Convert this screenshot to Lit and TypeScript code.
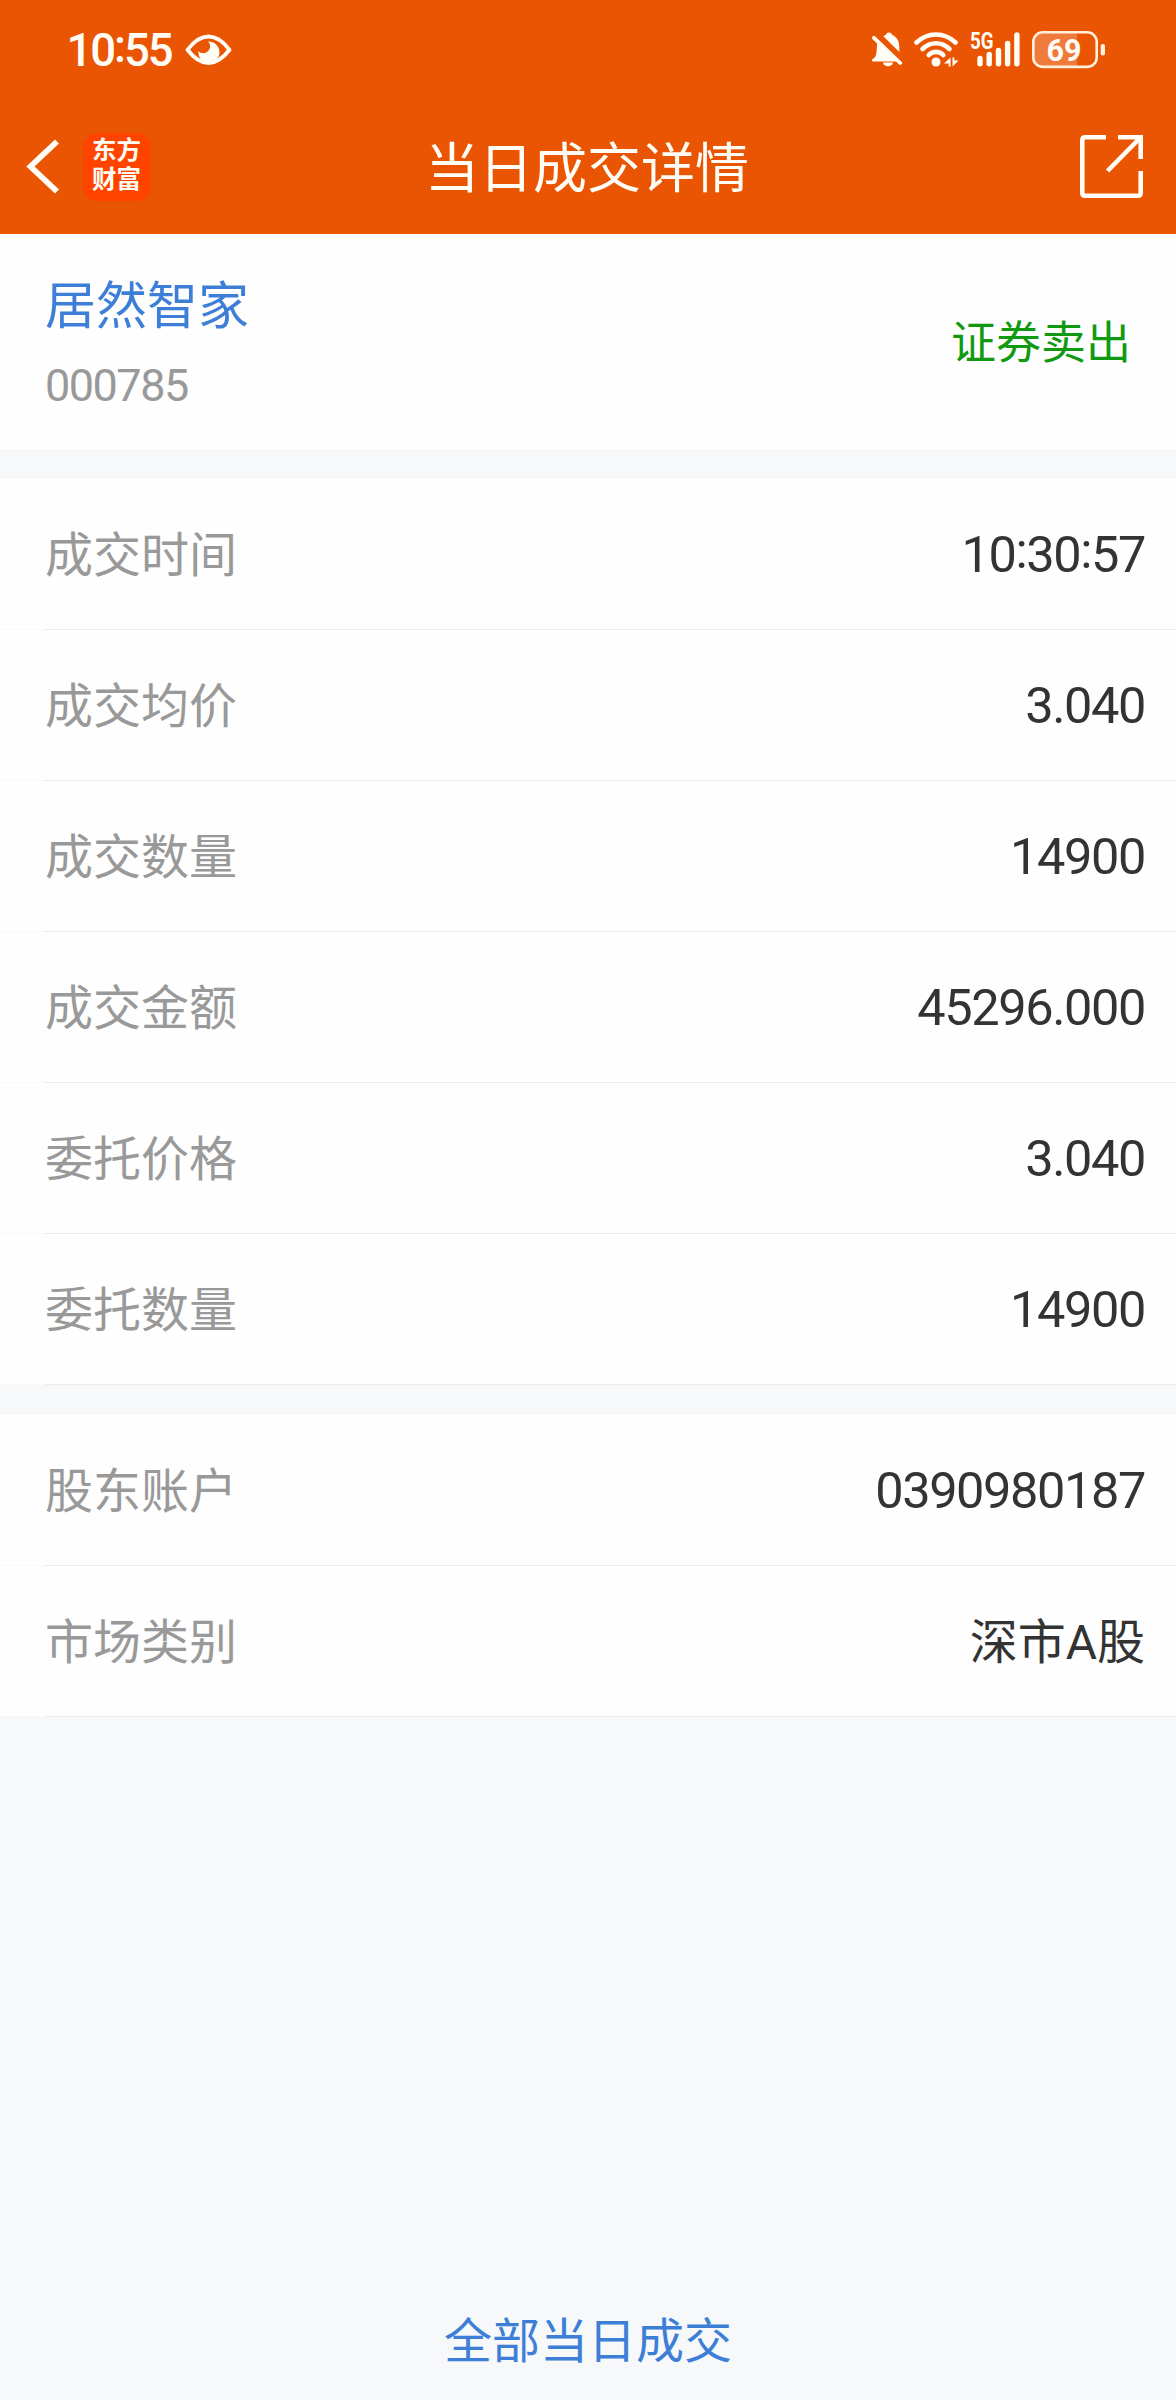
import { LitElement, html, css, svg } from "lit";
import { customElement, property } from "lit/decorators.js";

interface Row {
  label: string;
  value: string;
}

const tradeRows: Row[] = [
  { label: "成交时间", value: "10:30:57" },
  { label: "成交均价", value: "3.040" },
  { label: "成交数量", value: "14900" },
  { label: "成交金额", value: "45296.000" },
  { label: "委托价格", value: "3.040" },
  { label: "委托数量", value: "14900" },
];

const accountRows: Row[] = [
  { label: "股东账户", value: "0390980187" },
  { label: "市场类别", value: "深市A股" },
];

/* Colons sit a little higher than the baseline, centred on the digits. */
const raiseColons = (text: string) =>
  text.split(/(:)/).map((p) => (p === ":" ? html`<span class="colon">:</span>` : p));

@customElement("status-bar")
export class StatusBar extends LitElement {
  static styles = css`
    :host {
      display: flex;
      align-items: center;
      height: 100px;
      padding: 0 71px 0 66.5px;
      box-sizing: border-box;
      color: #fffdf5;
    }
    svg {
      display: block;
      flex: none;
    }
    .clock {
      width: 118px;
      padding-top: 1px;
      font-size: 45.5px;
      font-weight: 500;
      line-height: 60px;
      letter-spacing: -2.1px;
      white-space: nowrap;
    }
    .colon {
      vertical-align: 4px;
      line-height: 0;
    }
    .icons {
      display: flex;
      align-items: center;
      gap: 11px;
      margin-left: auto;
    }
    .signal {
      overflow: visible;
    }
  `;

  render() {
    return html`
      <div class="clock">${raiseColons("10:55")}</div>
      <svg width="47" height="32" viewBox="184.5 33.5 47 32">
        <path
          d="M187 49.300 C194 40 200 36 208 36 C216 36 222 40 229 49.300 C222 58.500 216 62.500 208 62.500 C200 62.500 194 58.500 187 49.300 Z"
          fill="none" stroke="#fffdf5" stroke-width="3.900" stroke-linejoin="round" />
        <path
          d="M207.500 41 C214.500 41 219 45.800 219 51.800 C219 58 214 62.500 208.500 62.500 C202 62.500 197.500 57.500 197.800 50.500 C200 53 203.500 53.500 206.500 51.500 C210.300 49 210.500 44 207.500 41 Z"
          fill="#fffdf5" />
      </svg>
      <div class="icons">
        <svg width="31" height="36" viewBox="872 32 31 36">
          <path d="M883.300 36.300 C884.500 35.500 885.300 35 886 34.700 C886.500 31.700 891.500 31.700 892 34.700 C897.500 37 899.300 42 899.300 47 L899.300 52 Z" fill="#fffdf5" />
          <path d="M877.300 41.500 L896 58.700 L896 61.500 L873.500 61.500 C871.500 61.500 871.500 59 873.500 58.500 C875.500 57.500 876.200 55 876.500 52 Z" fill="#fffdf5" />
          <path d="M883 62.500 H893 C892.500 67.500 883.500 67.500 883 62.500 Z" fill="#fffdf5" />
          <path d="M874 37.800 L900.200 63" stroke="#fffdf5" stroke-width="3.800" stroke-linecap="round" />
        </svg>
        <svg width="45" height="36" viewBox="914 32 45 36">
          <g fill="none" stroke="#fffdf5" stroke-width="4.600" stroke-linecap="round">
            <path d="M916.500 42.500 C928 31.800 944 31.800 955.500 42.500" />
            <path d="M922.500 49 C930.500 41.300 941.500 41.300 949.500 49" />
            <path d="M928.700 55 C932.700 50.800 939.300 50.800 943.300 55" />
          </g>
          <circle cx="936" cy="62" r="4.500" fill="#fffdf5" />
          <path d="M950.500 57.500 V66.500 H948.700 V63.500 H944 Z M952.500 66.500 V57.500 H954.300 V60.500 H958.500 Z" fill="#fffdf5" />
        </svg>
        <svg class="signal" width="51" height="36" viewBox="970 32 51 36">
          <text x="970" y="49.300" font-size="23" font-weight="700" textLength="23.500" lengthAdjust="spacingAndGlyphs" fill="#fffdf5">5G</text>
          ${[
            [980, 58.5],
            [989.2, 54.5],
            [998.5, 50.5],
            [1007.6, 43.5],
            [1016.9, 35],
          ].map(
            ([x, y]) => svg`<path d="M${x} ${y} V63.700" stroke="#fffdf5" stroke-width="5.400" stroke-linecap="round" />`
          )}
        </svg>
        <svg width="73" height="38" viewBox="1032 31 73 38">
          <path d="M1043 33 H1077 V67 H1043 Q1034 67 1034 58 V42 Q1034 33 1043 33 Z" fill="#fff" fill-opacity="0.220" />
          <rect x="1033.300" y="32.300" width="63.400" height="34.600" rx="9.500" fill="none" stroke="#fff0dc" stroke-width="2.600" />
          <rect x="1100.700" y="44" width="4.300" height="11.500" rx="2" fill="#fff0dc" />
          <text x="1046.500" y="61" font-size="32" font-weight="700" textLength="35" lengthAdjust="spacingAndGlyphs" fill="#fffdf5">69</text>
        </svg>
      </div>
    `;
  }
}

@customElement("nav-bar")
export class NavBar extends LitElement {
  static styles = css`
    :host {
      display: grid;
      grid-template-columns: 1fr auto 1fr;
      align-items: center;
      height: 134px;
      padding: 0 33px 0 26px;
      box-sizing: border-box;
      color: #fffdf5;
    }
    svg {
      display: block;
    }
    .left {
      display: flex;
      align-items: center;
      gap: 23px;
    }
    .logo {
      width: 68px;
      height: 68px;
      padding: 3px 0 0 9px;
      border-radius: 14px;
      background: #ff4400;
      box-sizing: border-box;
      font-size: 24.5px;
      font-weight: 700;
      line-height: 29px;
    }
    .title {
      font-size: 54px;
      line-height: 64px;
      margin: 5px 0 0 5px;
    }
    .share {
      justify-self: end;
    }
  `;

  render() {
    return html`
      <div class="left">
        <svg width="34" height="56" viewBox="26 139 34 56">
          <path d="M57 141.500 L30.500 166.500 L57 191.500" fill="none" stroke="#fffdf5" stroke-width="5.800" />
        </svg>
        <div class="logo">东方<br />财富</div>
      </div>
      <div class="title">当日成交详情</div>
      <svg class="share" width="63" height="64" viewBox="1080 135 63 64">
        <g fill="none" stroke="#fffdf5" stroke-width="4.600">
          <path d="M1106 137.300 H1085.300 Q1082.300 137.300 1082.300 140.300 V192.700 Q1082.300 195.700 1085.300 195.700 H1137.700 Q1140.700 195.700 1140.700 192.700 V171" />
          <path d="M1118 137.300 H1140.700 V159" />
          <path d="M1107.500 171 L1140 138" />
        </g>
      </svg>
    `;
  }
}

@customElement("detail-list")
export class DetailList extends LitElement {
  @property({ attribute: false }) rows: Row[] = [];

  static styles = css`
    :host {
      display: block;
    }
    .row {
      display: flex;
      align-items: center;
      justify-content: space-between;
      height: 151px;
      padding: 0 31px 0 45px;
      box-sizing: border-box;
      background:
        linear-gradient(#ebebeb, #ebebeb) 45px 100% / 100% 1px no-repeat,
        linear-gradient(#f8f8f8, #f8f8f8) 0 100% / 100% 1px no-repeat,
        #fefefe;
    }
    .label {
      padding-top: 2px;
      font-size: 48px;
      line-height: 72px;
      color: #999;
    }
    .value {
      font-size: 50.5px;
      line-height: 72px;
      letter-spacing: -1.4px;
      color: #333;
    }
    .value.cjk {
      padding-top: 2px;
      font-size: 48px;
      letter-spacing: 0;
    }
    .colon {
      vertical-align: 4px;
      line-height: 0;
    }
  `;

  render() {
    return this.rows.map(
      (r) => html`
        <div class="row">
          <span class="label">${r.label}</span>
          <span class="value ${/[^\d.:]/.test(r.value) ? "cjk" : ""}">${raiseColons(r.value)}</span>
        </div>
      `
    );
  }
}

@customElement("app-root")
export class AppRoot extends LitElement {
  static styles = css`
    :host {
      display: flex;
      flex-direction: column;
      height: 2400px;
      background: #f7f8fa;
      font-family: Roboto, "Noto Sans CJK SC", sans-serif;
    }
    .top {
      background: #ea5504;
      height: 234px;
    }
    .stock {
      display: flex;
      align-items: center;
      justify-content: space-between;
      height: 215px;
      padding: 4px 45px 0;
      box-sizing: border-box;
      background: #fefefe;
    }
    .name {
      padding-top: 2px;
      font-size: 51px;
      line-height: 76px;
      color: #3d7fd6;
    }
    .code {
      margin-top: 7px;
      font-size: 45px;
      line-height: 68px;
      letter-spacing: -1.5px;
      color: #999;
    }
    .side {
      font-size: 45px;
      line-height: 68px;
      color: #119a11;
    }
    .section {
      margin-top: 30px;
    }
    .all {
      margin-top: auto;
      height: 120px;
      text-align: center;
      font-size: 48px;
      line-height: 123px;
      color: #3d7fd6;
    }
  `;

  render() {
    return html`
      <div class="top">
        <status-bar></status-bar>
        <nav-bar></nav-bar>
      </div>
      <div class="stock">
        <div>
          <div class="name">居然智家</div>
          <div class="code">000785</div>
        </div>
        <div class="side">证券卖出</div>
      </div>
      <detail-list class="section" .rows=${tradeRows}></detail-list>
      <detail-list class="section" .rows=${accountRows}></detail-list>
      <div class="all">全部当日成交</div>
    `;
  }
}
